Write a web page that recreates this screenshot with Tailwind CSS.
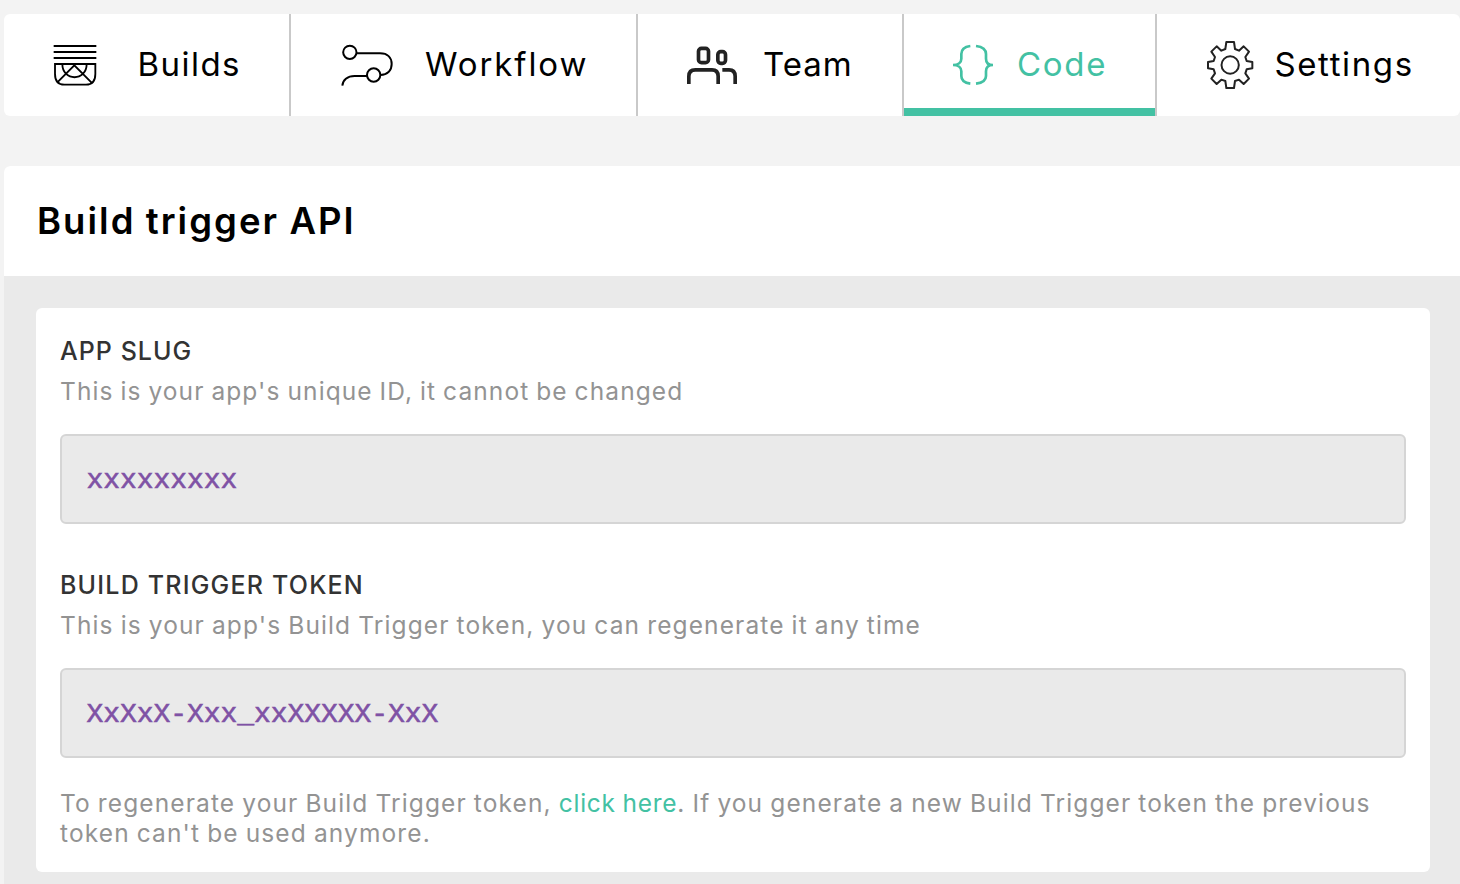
<!DOCTYPE html>
<html lang="en">
<head>
<meta charset="utf-8">
<title>Build trigger API</title>
<script src="https://cdn.jsdelivr.net/npm/@tailwindcss/browser@4"></script>
</head>
<body class="h-[884px] w-[1460px] overflow-hidden bg-[#f3f3f3] pt-[14px] pl-1 font-['Inter',sans-serif] text-black">
<nav class="flex h-[102px] overflow-hidden rounded-md bg-white text-[33px] leading-[101px] whitespace-nowrap">
  <a class="flex w-[287px] shrink-0 border-r-2 border-[#c9c9c9] pl-[48px]">
    <svg class="mt-[28px] h-[47px] w-[47px]" viewBox="156 126 141 141" fill="none" stroke="#000" stroke-width="5.5"><path d="M161 138H289M161 156H289M161 174H289M165 192H286V222Q286 254 258 254H193Q165 254 165 222ZM187 192C187 245 260 245 260 192M172 247L223 196L274 247"/></svg>
    <span class="ml-[38.500px] h-[101px] tracking-[1.45px]">Builds</span>
  </a>
  <a class="flex w-[347px] shrink-0 border-r-2 border-[#c9c9c9] pl-[47.500px]">
    <svg class="mt-[26px] h-[50px] w-[55px]" viewBox="57 60 165 150" fill="none" stroke="#000" stroke-width="6"><circle cx="89.500" cy="97" r="20"/><circle cx="161" cy="165" r="20"/><path d="M110 100H180C204 100 215 114 215 132C215 151 203 164 181 165M141 168H104C82 168 68 180 67 197"/></svg>
    <span class="ml-[31.500px] h-[101px] tracking-[1.9px]">Workflow</span>
  </a>
  <a class="flex w-[266px] shrink-0 border-r-2 border-[#c9c9c9] pl-[46px]">
    <svg class="mt-[26px] h-[50px] w-[55px]" viewBox="162 90 165 150" fill="none" stroke="#222" stroke-width="11"><rect x="205.500" y="115" width="30" height="43" rx="9"/><rect x="263.500" y="125" width="23" height="35" rx="9"/><path d="M176.500 222V199Q176.500 179.500 196 179.500H246Q264.500 179.500 264.500 199V222M277 179.500H297Q315.500 179.500 315.500 199V222"/></svg>
    <span class="ml-[24px] h-[101px] tracking-[1px]">Team</span>
  </a>
  <a class="flex w-[253px] shrink-0 border-r-2 border-[#c9c9c9] text-[#43c1a3]">
    <span class="flex h-[102px] w-full border-b-8 border-[#43c1a3] pl-[46px]">
    <svg class="mt-[26px] h-[50px] w-[46px] shrink-0" viewBox="150 90 138 150" fill="none" stroke="#43c1a3" stroke-width="8"><path d="M211 108C195 110 184 116 184 132V146C184 157 175 165 159 165C175 165 184 173 184 184V198C184 214 195 219 211 221M228 108C244 110 258 116 258 132V146C258 157 264 165 279 165C264 165 258 173 258 184V198C258 214 244 219 228 221"/></svg>
    <span class="ml-[21px] h-[101px] tracking-[1.7px]">Code</span>
    </span>
  </a>
  <a class="flex w-[303px] shrink-0 pl-[46px]">
    <svg class="mt-[23px] h-[56px] w-[54px]" viewBox="159 81 162 168" fill="none" stroke="#222" stroke-width="6" stroke-linejoin="round"><circle cx="240.500" cy="165" r="26"/><path d="M229 96H252L255 117L267 122L281 109L297 125L286 141L290 153L307 156V175L290 178L286 190L297 206L281 222L267 209L255 213L252 234H229L226 213L214 209L200 222L184 206L195 190L191 178L174 175V156L191 153L195 141L184 125L200 109L214 122L226 117Z"/></svg>
    <span class="ml-[17.500px] h-[101px] tracking-[1.6px]">Settings</span>
  </a>
</nav>
<main class="mt-[50px] h-[718px] rounded-tl-md bg-[#eaeaea]">
  <header class="h-[110px] rounded-tl-md bg-white pl-[33px]"><h1 class="text-[36.5px] leading-[111px] font-semibold tracking-[2.05px] [word-spacing:-1px]">Build trigger API</h1></header>
  <section class="mt-[32px] ml-[32px] h-[564px] w-[1394px] rounded-md bg-white px-6 pt-[23px] text-[24.5px] leading-[40px] whitespace-nowrap text-[#939393]">
    <h2 class="text-[25px] font-medium tracking-[1.05px] text-[#333]">APP SLUG</h2>
    <p class="tracking-[1.1px] [word-spacing:-1.100px]">This is your app's unique ID, it cannot be changed</p>
    <div class="mt-[23px] h-[90px] rounded-md border-2 border-[#d5d5d5] bg-[#eaeaea] pl-[24.500px] font-['Liberation_Mono',monospace] text-[28px] leading-[90px] tracking-[-0.05px] text-[#7f52a5] [-webkit-text-stroke:0.6px_#7f52a5]">xxxxxxxxx</div>
    <h2 class="mt-[41px] text-[25px] font-medium tracking-[1.2px] text-[#333]">BUILD TRIGGER TOKEN</h2>
    <p class="tracking-[1.12px] [word-spacing:-1px]">This is your app's Build Trigger token, you can regenerate it any time</p>
    <div class="mt-[23px] h-[90px] rounded-md border-2 border-[#d5d5d5] bg-[#eaeaea] pl-[24.500px] font-['Liberation_Mono',monospace] text-[28px] leading-[90px] tracking-[-0.05px] text-[#7f52a5] [-webkit-text-stroke:0.6px_#7f52a5]">XxXxX-Xxx_xxXXXXX-XxX</div>
    <p class="mt-[30px] leading-[30px] tracking-[1.12px] [word-spacing:-1px]">To regenerate your Build Trigger token, <a class="tracking-[0.75px] text-[#43c1a3]">click here</a>. If you generate a new Build Trigger token the previous<br>token can't be used anymore.</p>
  </section>
</main>
</body>
</html>
